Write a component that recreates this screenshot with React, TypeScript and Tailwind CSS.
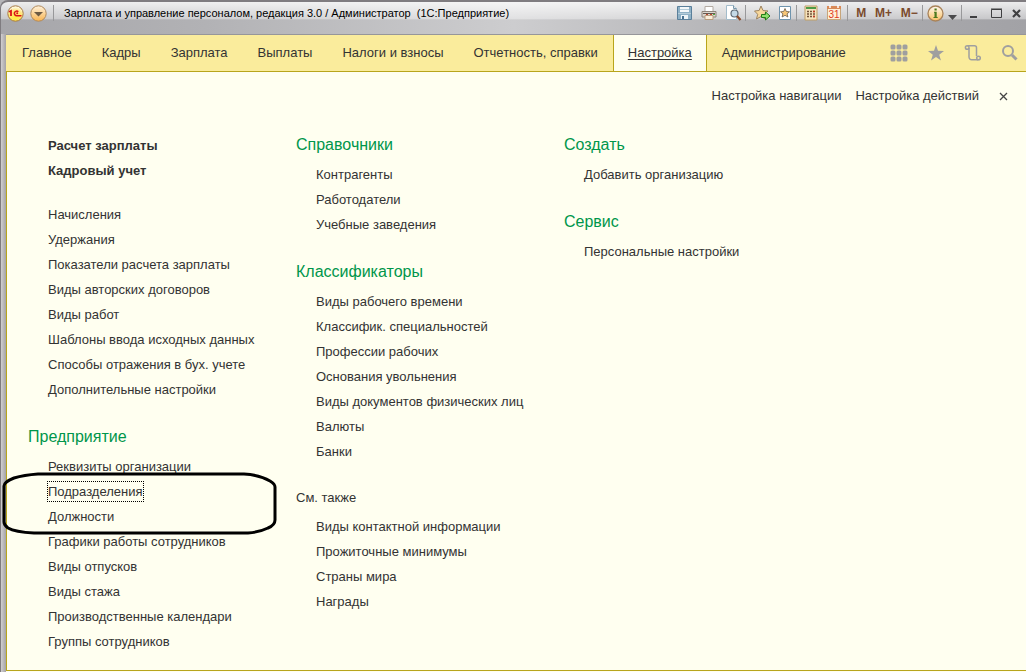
import { useState } from 'react'
import type { ReactNode } from 'react'

interface MenuSection {
  title?: string
  plain?: boolean
  items: string[]
}

const tabs = [
  'Главное',
  'Кадры',
  'Зарплата',
  'Выплаты',
  'Налоги и взносы',
  'Отчетность, справки',
  'Настройка',
  'Администрирование',
]

const mainLinks = ['Расчет зарплаты', 'Кадровый учет']

const settingsLinks: MenuSection = {
  items: [
    'Начисления',
    'Удержания',
    'Показатели расчета зарплаты',
    'Виды авторских договоров',
    'Виды работ',
    'Шаблоны ввода исходных данных',
    'Способы отражения в бух. учете',
    'Дополнительные настройки',
  ],
}

const company: MenuSection = {
  title: 'Предприятие',
  items: [
    'Реквизиты организации',
    'Подразделения',
    'Должности',
    'Графики работы сотрудников',
    'Виды отпусков',
    'Виды стажа',
    'Производственные календари',
    'Группы сотрудников',
  ],
}

const middleColumn: MenuSection[] = [
  { title: 'Справочники', items: ['Контрагенты', 'Работодатели', 'Учебные заведения'] },
  {
    title: 'Классификаторы',
    items: [
      'Виды рабочего времени',
      'Классифик. специальностей',
      'Профессии рабочих',
      'Основания увольнения',
      'Виды документов физических лиц',
      'Валюты',
      'Банки',
    ],
  },
  {
    title: 'См. также',
    plain: true,
    items: ['Виды контактной информации', 'Прожиточные минимумы', 'Страны мира', 'Награды'],
  },
]

const rightColumn: MenuSection[] = [
  { title: 'Создать', items: ['Добавить организацию'] },
  { title: 'Сервис', items: ['Персональные настройки'] },
]

function Separator() {
  return <span className="h-4 w-px bg-[#98989a]" />
}

function ToolButton({ label, className = '', children }: { label: string; className?: string; children: ReactNode }) {
  return (
    <button type="button" aria-label={label} title={label} className={`flex h-5 shrink-0 items-center justify-center ${className}`}>
      {children}
    </button>
  )
}

function LogoIcon() {
  return (
    <svg width="17" height="17" viewBox="0 0 17 17">
      <defs>
        <radialGradient id="logo" cx="50%" cy="80%" r="80%">
          <stop offset="0" stopColor="#ffee3c" />
          <stop offset="0.6" stopColor="#ffe67a" />
          <stop offset="1" stopColor="#fff" />
        </radialGradient>
      </defs>
      <circle cx="8.5" cy="8.5" r="7.7" fill="url(#logo)" stroke="#a8793f" />
      <path d="M2 6.700 4 5.800V11" fill="none" stroke="#dc1418" strokeWidth="1.800" />
      <path d="M11.300 6.800a2.300 2.300 0 1 0-1.500 3.900h4.700" fill="none" stroke="#dc1418" strokeWidth="1.500" />
      <circle cx="10.200" cy="8.300" r="1" fill="#dc1418" />
    </svg>
  )
}

function MainMenuIcon() {
  return (
    <svg width="17" height="17" viewBox="0 0 17 17">
      <defs>
        <linearGradient id="menu" x2="0" y2="1">
          <stop offset="0" stopColor="#fff2dc" />
          <stop offset="1" stopColor="#f9b44f" />
        </linearGradient>
      </defs>
      <circle cx="8.5" cy="8.5" r="7.7" fill="url(#menu)" stroke="#b0895c" />
      <path d="M4 7h9l-4.500 4.500z" fill="#6d5a43" />
    </svg>
  )
}

function SaveIcon() {
  return (
    <svg width="16" height="16" viewBox="0 0 16 16">
      <path d="M.5 1.500h14v13h-14z" fill="#8fb1c6" stroke="#5a7f9a" />
      <path d="M3 2h9v5H3z" fill="#f4f8fa" />
      <path d="M3 4.500h9M1 8.500h13" stroke="#b5ccd9" />
      <path d="M4 10h7v4H4z" fill="#eef4f7" />
      <path d="M5 11h2v3H5z" fill="#47708f" />
    </svg>
  )
}

function PrinterIcon() {
  return (
    <svg width="16" height="16" viewBox="0 0 16 16">
      <path d="M4 1.500h8V7H4z" fill="#fff" stroke="#b3aaa2" />
      <path d="M1 6.500h14v5.500H1z" fill="#ddd6ce" stroke="#8e847a" />
      <path d="M2 8.500h12" stroke="#665a50" />
      <path d="M4 10.500h8v4H4z" fill="#fbeedb" stroke="#b79d7f" />
      <path d="M5 9.500h2M9 9.500h2" stroke="#c0462c" />
      <path d="M12 9.500h2" stroke="#4fae3f" />
    </svg>
  )
}

function PreviewIcon() {
  return (
    <svg width="17" height="16" viewBox="0 0 17 16">
      <path d="M1.500.5h7l3 3v11h-10z" fill="#fff" stroke="#a3bccb" />
      <path d="M8.500.5v3h3" fill="#d9e6ed" stroke="#7b98aa" />
      <circle cx="9.5" cy="8.5" r="3.500" fill="#c5d9e6" stroke="#5e6a75" strokeWidth="1.200" />
      <path d="m12 11 3.500 4" stroke="#8b4a28" strokeWidth="2.200" />
    </svg>
  )
}

function AddFavoriteIcon() {
  return (
    <svg width="17" height="16" viewBox="0 0 17 16">
      <path d="m7 1 2 4.500 5 .5-3.800 3.300L11.500 14 7 11.500 2.500 14l1.200-4.700L.5 6l4.600-.5z" fill="#f8d79b" stroke="#9d8461" />
      <path d="M7.500 9.500h4V7l4.500 4-4.500 4v-2.500h-4z" fill="#8fe06c" stroke="#237b18" />
    </svg>
  )
}

function FavoritesIcon() {
  return (
    <svg width="14" height="16" viewBox="0 0 14 16">
      <path d="M1.500 1.500h11v13h-11z" fill="#fff" stroke="#6f94ad" />
      <path d="m7 3.500 1.300 3 3.200.3-2.400 2 .8 3.200L7 10.300 4.100 12l.8-3.200-2.400-2 3.200-.3z" fill="#f8c777" stroke="#6b5b48" strokeWidth=".8" />
    </svg>
  )
}

function CalculatorIcon() {
  return (
    <svg width="14" height="16" viewBox="0 0 14 16">
      <path d="M1 1h12v14H1z" fill="#f6e3bd" stroke="#c09f68" />
      <path d="M2 2h10v2H2z" fill="#4d9b45" />
      <path d="M3 6.500h8M3 9h8M3 11.500h8" stroke="#73533a" strokeWidth="1.300" strokeDasharray="2 1" />
      <path d="M9 6.500h2M9 11.500h2" stroke="#c33b25" strokeWidth="1.300" />
    </svg>
  )
}

function CalendarIcon() {
  return (
    <svg width="14" height="16" viewBox="0 0 14 16">
      <path d="M.5 1.500h13v13H.5z" fill="#fff0d7" stroke="#c7a57a" />
      <path d="M0 1h14v3H0z" fill="#d98a58" />
      <path d="M3 0v3M11 0v3" stroke="#fff" strokeWidth="1.500" />
      <text x="7" y="13" textAnchor="middle" fontSize="10" fontFamily="Liberation Sans, sans-serif" fill="#e03a1e">31</text>
    </svg>
  )
}

function InfoIcon() {
  return (
    <svg width="17" height="17" viewBox="0 0 17 17">
      <defs>
        <linearGradient id="info" x2="0" y2="1">
          <stop offset="0" stopColor="#fffaf0" />
          <stop offset="1" stopColor="#fbc063" />
        </linearGradient>
      </defs>
      <circle cx="8.5" cy="8.5" r="7.500" fill="url(#info)" stroke="#a9835a" strokeWidth="1.300" />
      <path d="M7.500 3.500h2.200v2H7.500zM7 6.800h2.700V12h1v1H6.500v-1h1V7.800H7z" fill="#4d7a1f" />
    </svg>
  )
}

function TitleBar() {
  return (
    <header className="flex h-[34px] items-start rounded-tl-lg border-l border-t-2 border-[#7f7c80] bg-[linear-gradient(#fffc,#fff6_52%,#fff0_56%),linear-gradient(90deg,#a6a6aa,#b2b2b5_20%,#cdcdcf_50%,#b0b0b3_75%,#a2a2a6)] pl-1.5">
      <div className="flex h-[22px] min-w-0 flex-1 items-center">
        <ToolButton label="О программе"><LogoIcon /></ToolButton>
        <ToolButton label="Главное меню" className="mx-1.5"><MainMenuIcon /></ToolButton>
        <Separator />
        <h1 className="ml-2.5 truncate whitespace-pre text-[11px] text-black">
          {'Зарплата и управление персоналом, редакция 3.0 / Администратор  (1С:Предприятие)'}
        </h1>
      </div>
      <div className="flex h-[22px] items-center">
        <ToolButton label="Сохранить" className="w-6"><SaveIcon /></ToolButton>
        <ToolButton label="Печать" className="w-6"><PrinterIcon /></ToolButton>
        <ToolButton label="Предварительный просмотр" className="w-6"><PreviewIcon /></ToolButton>
        <Separator />
        <ToolButton label="Добавить в избранное" className="ml-1 w-6"><AddFavoriteIcon /></ToolButton>
        <ToolButton label="Избранное" className="w-[22px]"><FavoritesIcon /></ToolButton>
        <Separator />
        <ToolButton label="Калькулятор" className="ml-0.5 w-6"><CalculatorIcon /></ToolButton>
        <ToolButton label="Календарь" className="mr-0.5 w-[22px]"><CalendarIcon /></ToolButton>
        <Separator />
        <div className="flex w-[74px] justify-around pl-1 text-[12px] font-bold text-[#7a4a2c]">
          <button type="button">M</button>
          <button type="button">M+</button>
          <button type="button">M−</button>
        </div>
        <Separator />
        <ToolButton label="Справка" className="ml-1 w-[17px]"><InfoIcon /></ToolButton>
        <ToolButton label="Ещё" className="w-[17px]">
          <svg width="9" height="5" viewBox="0 0 9 5" className="mt-2"><path d="M0 0h9L4.500 5z" fill="#4a4a4c" /></svg>
        </ToolButton>
        <Separator />
        <ToolButton label="Свернуть" className="w-6">
          <svg width="8" height="12" viewBox="0 0 8 12"><path d="M0 10h7" stroke="#3f3f41" strokeWidth="2" /></svg>
        </ToolButton>
        <ToolButton label="Развернуть" className="w-5">
          <svg width="11" height="10" viewBox="0 0 11 10"><path d="M.5 1.500h10v8H.5zM0 1h11" fill="none" stroke="#3f3f41" /></svg>
        </ToolButton>
        <ToolButton label="Закрыть" className="w-5">
          <svg width="9" height="9" viewBox="0 0 9 9"><path d="m1 1 7 7M8 1 1 8" stroke="#3f3f41" strokeWidth="2.200" /></svg>
        </ToolButton>
      </div>
    </header>
  )
}

function NavIcons() {
  const dots = [3, 9, 15]
  return (
    <div className="ml-auto flex items-center gap-[19px] pr-2 text-[#9f9f9f]">
      <ToolButton label="Меню функций">
        <svg width="18" height="18" viewBox="0 0 18 18" fill="currentColor">
          {dots.map((y) => dots.map((x) => <rect key={`${x}-${y}`} x={x - 2.5} y={y - 2.5} width="5" height="5" rx="1.500" />))}
        </svg>
      </ToolButton>
      <ToolButton label="Избранное">
        <svg width="18" height="18" viewBox="0 0 18 18" fill="currentColor">
          <path d="m9 1 2 5.800 6 .2-4.800 3.700L14 16.500 9 13l-5 3.500 1.800-5.800L1 7l6-.2z" />
        </svg>
      </ToolButton>
      <ToolButton label="История">
        <svg width="18" height="18" viewBox="0 0 18 18" fill="none" stroke="currentColor" strokeWidth="1.500">
          <circle cx="3.200" cy="3.500" r="1.800" />
          <path d="M3.500 1.800h7a2 2 0 0 1 2 2V12M5 4v9a2.700 2.700 0 0 0 2.700 2.700h6.800" />
          <circle cx="14.500" cy="14" r="1.800" />
        </svg>
      </ToolButton>
      <ToolButton label="Поиск">
        <svg width="17" height="18" viewBox="0 0 17 18" fill="none" stroke="currentColor">
          <circle cx="7" cy="7" r="5" strokeWidth="2" />
          <path d="m11 11 4.500 4.500" strokeWidth="3" />
        </svg>
      </ToolButton>
    </div>
  )
}

function Section({ section, focused }: { section: MenuSection; focused?: string }) {
  return (
    <section>
      {section.title && (
        <h2 className={section.plain ? 'mb-[5px] leading-[22px]' : 'mb-[5px] text-[16px] leading-6 text-[#00964b]'}>{section.title}</h2>
      )}
      <ul className="pl-5">
        {section.items.map((item) => (
          <li key={item} className="flex h-[25px] items-center">
            <a href="#" className={item === focused ? 'outline-1 outline-dotted outline-black' : 'hover:underline'}>{item}</a>
          </li>
        ))}
      </ul>
    </section>
  )
}

export default function App() {
  const [activeTab, setActiveTab] = useState('Настройка')

  return (
    <div className="flex min-h-screen flex-col bg-[#b5b5b8] font-['Liberation_Sans',Arial,sans-serif] text-[13px] text-[#333]">
      <TitleBar />
      <div className="flex flex-1 border-l border-[#7f7c80]">
        <div className="w-[5px] bg-linear-to-r from-[#d0ced0] to-[#a5a3a6]" />
        <div className="flex min-w-0 flex-1 flex-col border-t border-[#96969a] bg-[#fffff0] pb-px">
          <nav className="flex h-[37px] border-b border-[#b8a51c] bg-[#faec9c] pl-px">
            {tabs.map((tab) => (
              <button
                key={tab}
                type="button"
                onClick={() => setActiveTab(tab)}
                className={
                  tab === activeTab
                    ? 'whitespace-nowrap border-x border-[#b8a51c] bg-[#fffff0] px-3.5 underline underline-offset-2'
                    : 'whitespace-nowrap px-[15px]'
                }
              >
                {tab}
              </button>
            ))}
            <NavIcons />
          </nav>

          <main className="flex-1 border-b border-l border-[#b8a51c] pb-4">
            <div className="flex h-12 items-center justify-end gap-3.5 pr-[18px]">
              <a href="#">Настройка навигации</a>
              <a href="#">Настройка действий</a>
              <button type="button" aria-label="Закрыть" className="ml-1.5">
                <svg width="9" height="9" viewBox="0 0 9 9"><path d="m1 1 7 7M8 1 1 8" stroke="#444" strokeWidth="1.300" /></svg>
              </button>
            </div>

            <div className="grid grid-cols-[268px_268px_1fr] pl-[21px] pt-[13px]">
              <div className="flex flex-col gap-[23px]">
                <div>
                  <ul className="mb-[19px] pl-5 font-bold">
                    {mainLinks.map((link) => (
                      <li key={link} className="flex h-[25px] items-center">
                        <a href="#">{link}</a>
                      </li>
                    ))}
                  </ul>
                  <Section section={settingsLinks} />
                </div>
                <div className="relative">
                  <Section section={company} focused="Подразделения" />
                  <svg className="pointer-events-none absolute -left-[26px] top-[47px]" width="276" height="64" viewBox="0 0 276 64" fill="none">
                    <path d="M36 2H242Q258 3 268 9Q273 12 273 15V48Q273 53 266 56Q258 60 246 61H32Q13 60 6 56Q2 53 2 50V14Q2 10 12 6Q22 3 36 2Z" stroke="#000" strokeWidth="3" />
                  </svg>
                </div>
              </div>
              <div className="flex flex-col gap-[23px]">
                {middleColumn.map((section) => (
                  <Section key={section.title} section={section} />
                ))}
              </div>
              <div className="flex flex-col gap-[23px]">
                {rightColumn.map((section) => (
                  <Section key={section.title} section={section} />
                ))}
              </div>
            </div>
          </main>
        </div>
      </div>
    </div>
  )
}
